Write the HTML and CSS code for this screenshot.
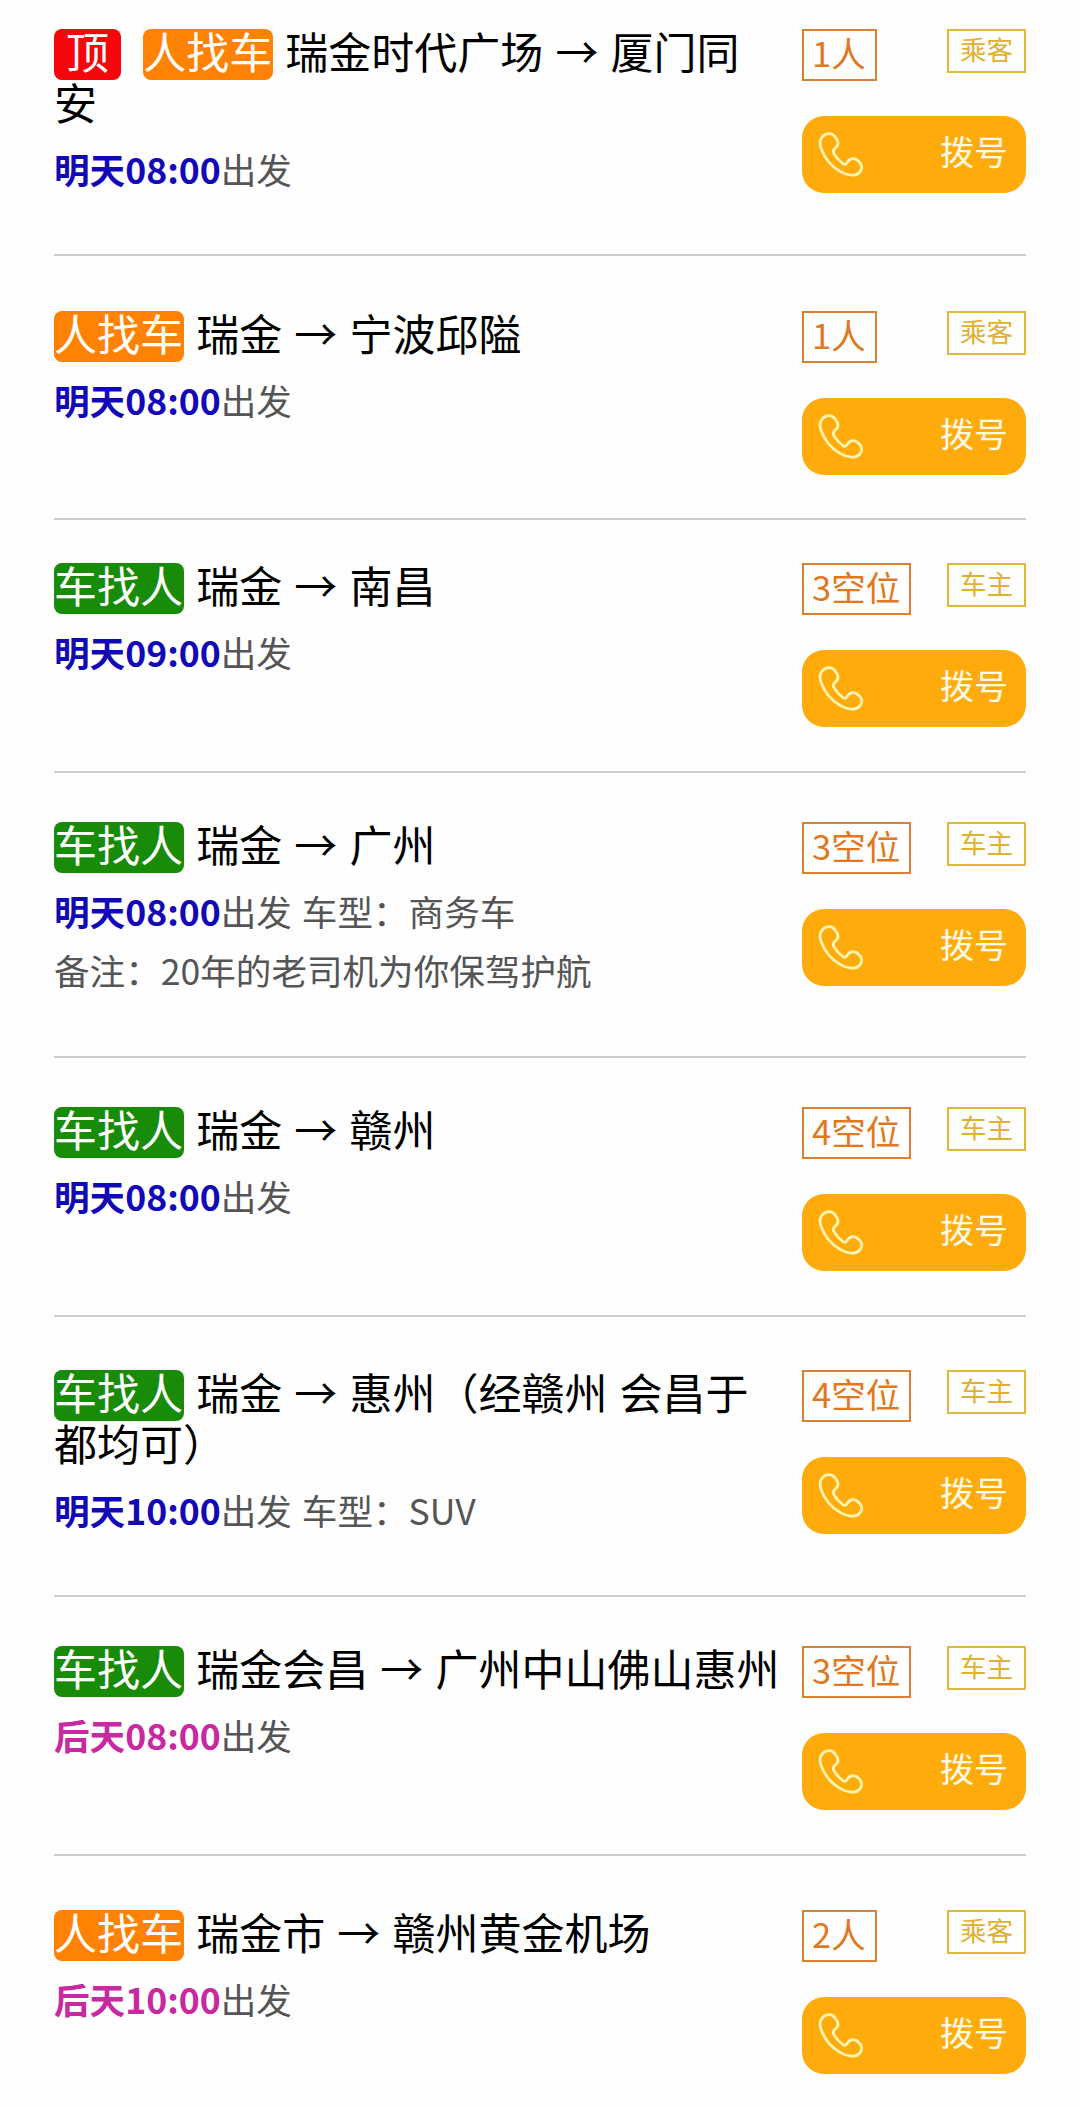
FILE: index.html
```html
<!DOCTYPE html>
<html lang="zh-CN">
<head>
<meta charset="utf-8">
<title>拼车信息</title>
<link rel="stylesheet" href="styles.css">
</head>
<body>
<svg class="sprite" aria-hidden="true">
  <symbol id="phone" viewBox="0 0 44 44">
    <path d="M4.5 4.5C8 .8 13.5 .6 16.500 4.500C20.500 9.500 20.500 13 17 15.500C14.500 17.500 14.500 19.500 16 22C18.500 26 21 28.500 24.500 31C26 32 27.500 31.500 28.500 29.800C31 25.500 35.500 25 39 28C43.500 31.500 43.800 36 40.500 39.500C36.500 43.500 29 43 21.500 38.500C13 33.500 6 24.500 3 16C1.400 11.500 1.500 7.500 4.500 4.500Z"/>
  </symbol>
</svg>
<main class="list">
  <article class="ride">
    <div class="info">
      <h2 class="route"><span class="badge top">顶</span> <span class="badge seek">人找车</span> 瑞金时代广场 → 厦门同安</h2>
      <p class="detail"><b class="time">明天08:00</b>出发</p>
    </div>
    <div class="side">
      <div class="tags"><span class="seats">1人</span><span class="role">乘客</span></div>
      <a class="call"><svg><use href="#phone"/></svg><span>拨号</span></a>
    </div>
  </article>
  <article class="ride">
    <div class="info">
      <h2 class="route"><span class="badge seek">人找车</span> 瑞金 → 宁波邱隘</h2>
      <p class="detail"><b class="time">明天08:00</b>出发</p>
    </div>
    <div class="side">
      <div class="tags"><span class="seats">1人</span><span class="role">乘客</span></div>
      <a class="call"><svg><use href="#phone"/></svg><span>拨号</span></a>
    </div>
  </article>
  <article class="ride">
    <div class="info">
      <h2 class="route"><span class="badge offer">车找人</span> 瑞金 → 南昌</h2>
      <p class="detail"><b class="time">明天09:00</b>出发</p>
    </div>
    <div class="side">
      <div class="tags"><span class="seats">3空位</span><span class="role">车主</span></div>
      <a class="call"><svg><use href="#phone"/></svg><span>拨号</span></a>
    </div>
  </article>
  <article class="ride">
    <div class="info">
      <h2 class="route"><span class="badge offer">车找人</span> 瑞金 → 广州</h2>
      <p class="detail"><b class="time">明天08:00</b>出发 车型：商务车</p>
      <p class="detail">备注：20年的老司机为你保驾护航</p>
    </div>
    <div class="side">
      <div class="tags"><span class="seats">3空位</span><span class="role">车主</span></div>
      <a class="call"><svg><use href="#phone"/></svg><span>拨号</span></a>
    </div>
  </article>
  <article class="ride">
    <div class="info">
      <h2 class="route"><span class="badge offer">车找人</span> 瑞金 → 赣州</h2>
      <p class="detail"><b class="time">明天08:00</b>出发</p>
    </div>
    <div class="side">
      <div class="tags"><span class="seats">4空位</span><span class="role">车主</span></div>
      <a class="call"><svg><use href="#phone"/></svg><span>拨号</span></a>
    </div>
  </article>
  <article class="ride">
    <div class="info">
      <h2 class="route"><span class="badge offer">车找人</span> 瑞金 → 惠州（经赣州 会昌于都均可）</h2>
      <p class="detail"><b class="time">明天10:00</b>出发 车型：SUV</p>
    </div>
    <div class="side">
      <div class="tags"><span class="seats">4空位</span><span class="role">车主</span></div>
      <a class="call"><svg><use href="#phone"/></svg><span>拨号</span></a>
    </div>
  </article>
  <article class="ride">
    <div class="info">
      <h2 class="route"><span class="badge offer">车找人</span> 瑞金会昌 → 广州中山佛山惠州</h2>
      <p class="detail"><b class="time later">后天08:00</b>出发</p>
    </div>
    <div class="side">
      <div class="tags"><span class="seats">3空位</span><span class="role">车主</span></div>
      <a class="call"><svg><use href="#phone"/></svg><span>拨号</span></a>
    </div>
  </article>
  <article class="ride">
    <div class="info">
      <h2 class="route"><span class="badge seek">人找车</span> 瑞金市 → 赣州黄金机场</h2>
      <p class="detail"><b class="time later">后天10:00</b>出发</p>
    </div>
    <div class="side">
      <div class="tags"><span class="seats">2人</span><span class="role">乘客</span></div>
      <a class="call"><svg><use href="#phone"/></svg><span>拨号</span></a>
    </div>
  </article>
</main>
</body>
</html>
```
FILE: styles.css
```css
* { box-sizing: border-box; }
body {
  margin: 0;
  background: #fefefe;
  color: #000;
  font-family: "Noto Sans CJK SC", sans-serif;
}
.sprite { display: none; }
.list {
  display: grid;
  grid-template-rows: 256px 264px 253px 285px 259px 280px 259px 251px;
  padding: 0 54px;
}
.ride {
  display: flex;
  justify-content: space-between;
  padding-top: 49px;
  border-bottom: 2px solid #ccc;
}
.ride:nth-child(1) { padding-top: 29px; }
.ride:nth-child(2) { padding-top: 55px; }
.ride:nth-child(3) { padding-top: 43px; }
.ride:nth-child(6) { padding-top: 53px; }
.ride:nth-child(8) { padding-top: 54px; border-bottom: 0; }
.info { width: 730px; }
.route {
  width: 710px;
  margin: -4px 0 12px;
  font-size: 43px;
  font-weight: 400;
  line-height: 51px;
  word-spacing: 2.500px;
}
.ride:nth-child(7) .route { width: 740px; }
.badge {
  display: inline-block;
  height: 51px;
  margin: 4px 0 -4px;
  padding-right: 1px;
  border-radius: 8px;
  color: #fff;
  line-height: 43px;
  vertical-align: top;
}
.top { margin-right: 10px; padding: 0 12px; background: #f6060a; }
.seek { background: #ff8205; }
.offer { background: #188c08; }
.detail {
  margin: 0;
  color: #555;
  font-size: 35.600px;
  line-height: 59px;
  word-spacing: 2px;
}
.time { color: #1208b8; font-weight: 700; }
.later { color: #c828a0; }
.side { width: 224px; }
.tags {
  display: flex;
  justify-content: space-between;
  align-items: flex-start;
  height: 87px;
}
.seats {
  height: 52px;
  padding: 0 9px 0 8px;
  border: 2px solid #d98032;
  color: #e07820;
  font-size: 34.500px;
  line-height: 42px;
}
.role {
  width: 79px;
  height: 44px;
  border: 2px solid #e0b83a;
  color: #e0b030;
  font-size: 26.500px;
  line-height: 35px;
  text-align: center;
}
.call {
  display: flex;
  justify-content: space-between;
  align-items: center;
  height: 77px;
  padding: 0 18px 0 16px;
  border-radius: 22px;
  background: #ffab0c;
  color: #fffbe6;
  font-size: 34px;
}
.call span { padding-bottom: 7px; line-height: 40px; }
.call svg {
  width: 45px;
  height: 45px;
  fill: none;
  stroke: #fff3b0;
  stroke-width: 2.800;
}
```
